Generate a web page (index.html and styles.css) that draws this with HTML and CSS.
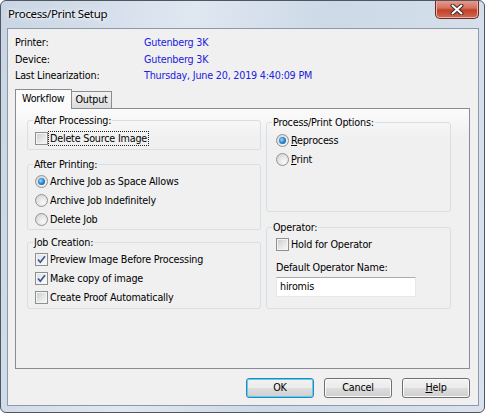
FILE: index.html
```html
<!DOCTYPE html>
<html lang="en">
<head>
  <meta charset="UTF-8">
  <title>Process/Print Setup</title>
  <link rel="stylesheet" href="styles.css">
</head>
<body>

  <div class="window">
    <div class="titlebar">
      <span class="title">Process/Print Setup</span>
      <span class="close">
        <svg width="14" height="11" viewBox="0 0 14 11">
          <path d="M2.5 1.5 L11.5 9.5 M11.5 1.5 L2.5 9.5" stroke="#3b2a28" stroke-width="4" stroke-linecap="round"/>
          <path d="M2.5 1.5 L11.5 9.5 M11.5 1.5 L2.5 9.5" stroke="#fff" stroke-width="2" stroke-linecap="round"/>
        </svg>
      </span>
    </div>

    <div class="client">
      <div class="info">
        <span>Printer:</span><span class="val">Gutenberg 3K</span>
        <span>Device:</span><span class="val">Gutenberg 3K</span>
        <span>Last Linearization:</span><span class="val">Thursday, June 20, 2019 4:40:09 PM</span>
      </div>

      <div class="tabs">
        <span class="tab active">Workflow</span>
        <span class="tab">Output</span>
      </div>

      <div class="panel">
        <div class="col col-left">
          <fieldset class="grp g-proc">
            <legend>After Processing:</legend>
            <div class="row"><span class="cb"></span><span class="focus">Delete Source Image</span></div>
          </fieldset>

          <fieldset class="grp g-print">
            <legend>After Printing:</legend>
            <div class="row"><span class="rb on"></span>Archive Job as Space Allows</div>
            <div class="row"><span class="rb"></span>Archive Job Indefinitely</div>
            <div class="row"><span class="rb"></span>Delete Job</div>
          </fieldset>

          <fieldset class="grp g-job">
            <legend>Job Creation:</legend>
            <div class="row"><span class="cb on"><svg width="11" height="11" viewBox="0 0 11 11"><path d="M2 5.5 L4.3 8.2 L9 2.2" fill="none" stroke="#3d5592" stroke-width="1.7"/></svg></span>Preview Image Before Processing</div>
            <div class="row"><span class="cb on"><svg width="11" height="11" viewBox="0 0 11 11"><path d="M2 5.5 L4.3 8.2 L9 2.2" fill="none" stroke="#3d5592" stroke-width="1.7"/></svg></span>Make copy of image</div>
            <div class="row"><span class="cb"></span>Create Proof Automatically</div>
          </fieldset>
        </div>

        <div class="col col-right">
          <fieldset class="grp g-opts">
            <legend>Process/Print Options:</legend>
            <div class="row"><span class="rb on"></span><span><u>R</u>eprocess</span></div>
            <div class="row"><span class="rb"></span><span><u>P</u>rint</span></div>
          </fieldset>

          <fieldset class="grp g-oper">
            <legend>Operator:</legend>
            <div class="row"><span class="cb"></span>Hold for Operator</div>
            <div class="field-label">Default Operator Name:</div>
            <div class="textbox">hiromis</div>
          </fieldset>
        </div>
      </div>

      <div class="buttons">
        <span class="btn default">OK</span>
        <span class="btn">Cancel</span>
        <span class="btn"><u>H</u>elp</span>
      </div>
    </div>
  </div>

</body>
</html>
```

FILE: styles.css
```css
:root {
  --face: #f0f0f0;
  --text: #000;
  --link: #2020e0;
  --tab-line: #898c95;
  --group-line: #d5dfe5;
}

body {
  margin: 0;
  font-family: "DejaVu Sans Condensed", "DejaVu Sans", sans-serif;
  font-stretch: condensed;
  font-size: 10.7px;
  letter-spacing: -0.2px;
  color: var(--text);
  background: #fff;
}

.window {
  width: 485px;
  height: 413px;
  box-sizing: border-box;
  border: 1px solid #4f5660;
  border-radius: 6px;
  background: linear-gradient(100deg, #c9d5e4 0%, #dfe7f1 35%, #cdd9e7 60%, #d9e2ee 100%);
  display: flex;
  flex-direction: column;
  overflow: hidden;
}

.titlebar {
  height: 27px;
  display: flex;
  align-items: flex-start;
  padding-left: 7px;
}

.title {
  font-family: "Noto Sans", "Open Sans", sans-serif;
  font-stretch: normal;
  font-size: 11.5px;
  letter-spacing: -0.35px;
  margin-top: 5px;
  text-shadow: 0 0 6px #fff, 0 0 3px #fff;
}

.close {
  margin-left: auto;
  margin-right: 5px;
  margin-top: -1px;
  width: 44px;
  height: 19px;
  box-sizing: border-box;
  border: 1px solid #6b2b22;
  border-top: none;
  border-radius: 0 0 5px 5px;
  background: linear-gradient(#e8a093 0%, #d7705e 45%, #c2402a 55%, #cf6a4e 100%);
  box-shadow: inset 0 0 0 1px #eab4aa;
  display: flex;
  align-items: center;
  justify-content: center;
}

.client {
  flex: 1;
  margin: 0 5px 6px 6px;
  border: 1px solid #8e99a8;
  background: var(--face);
  padding: 6px 8px 7px 7px;
  display: flex;
  flex-direction: column;
}

.info {
  display: grid;
  grid-template-columns: 129px auto;
  line-height: 16.5px;
}

.info .val {
  color: var(--link);
}

.tabs {
  display: flex;
  align-items: flex-end;
  margin-top: 4px;
  margin-bottom: -1px;
  position: relative;
  z-index: 1;
}

.tab {
  border: 1px solid var(--tab-line);
  border-bottom: none;
  height: 16px;
  line-height: 16px;
  padding: 0 3px;
  margin-bottom: 1px;
  background: linear-gradient(#f2f2f2, #dcdcdc);
}

.tab.active {
  height: 19px;
  line-height: 18px;
  padding: 0 7px 0 6px;
  margin-bottom: 0;
  margin-right: -1px;
  background: #fbfbfb;
  position: relative;
  z-index: 2;
}

.panel {
  height: 261px;
  box-sizing: border-box;
  border: 1px solid var(--tab-line);
  background: linear-gradient(#fbfbfb 0px, var(--face) 30px);
  display: grid;
  grid-template-columns: 234px 185px;
  column-gap: 5px;
  padding-left: 11px;
  align-items: start;
}

.col {
  display: flex;
  flex-direction: column;
}

.col-left {
  padding-top: 5px;
}

.col-right {
  padding-top: 7px;
}

.grp {
  margin: 0;
  padding: 0;
  border: 1px solid var(--group-line);
  border-radius: 3px;
  min-width: 0;
}

.grp legend {
  margin-left: 5px;
  padding: 0 1px;
  line-height: 13px;
}

.row {
  display: flex;
  align-items: center;
  gap: 2px;
  height: 19px;
  margin-left: 7px;
}

.col-right .row {
  margin-left: 9px;
}

.g-proc { padding: 2px 0 1px; }
.g-print { padding: 1px 0 0; margin-top: 8px; }
.g-job { padding: 1px 0 1px; margin-top: 6px; }
.g-opts { padding: 2px 0 42px; }
.g-oper { padding: 1px 0 11px; margin-top: 9px; }

.cb {
  width: 13px;
  height: 13px;
  box-sizing: border-box;
  border: 1px solid #8e8f8f;
  background: linear-gradient(135deg, #c9cbcd 0%, #eceded 70%, #f7f7f7 100%);
  box-shadow: inset 0 0 0 1px #f4f4f4;
  display: flex;
  align-items: center;
  justify-content: center;
  flex-shrink: 0;
}

.cb.on {
  background: linear-gradient(135deg, #dcdfe3 0%, #f4f5f6 70%, #fff 100%);
}

.rb {
  width: 13px;
  height: 13px;
  box-sizing: border-box;
  border: 1px solid #939393;
  border-radius: 50%;
  background: radial-gradient(circle at 65% 70%, #fafafa 0%, #e2e2e2 55%, #cdcdcd 100%);
  display: flex;
  align-items: center;
  justify-content: center;
  flex-shrink: 0;
}

.rb.on::after {
  content: "";
  width: 7px;
  height: 7px;
  border-radius: 50%;
  background: radial-gradient(circle at 40% 40%, #a6dcfb 0%, #2b8ad5 45%, #0d4f8f 100%);
}

.focus {
  outline: 1px dotted #222;
  padding: 0 1px;
  margin-left: -1px;
  line-height: 13px;
}

.field-label {
  margin: 7px 0 0 9px;
  line-height: 13px;
}

.textbox {
  margin: 3px 0 0 9px;
  width: 140px;
  height: 20px;
  box-sizing: border-box;
  border: 1px solid #e3e9ef;
  border-top-color: #abadb3;
  background: #fff;
  line-height: 18px;
  padding-left: 3px;
}

.buttons {
  display: flex;
  justify-content: flex-end;
  gap: 10px;
  margin-top: 9px;
  width: 455px;
}

.btn {
  width: 68px;
  height: 20px;
  box-sizing: border-box;
  border: 1px solid #707070;
  border-radius: 3px;
  background: linear-gradient(#f2f2f2 0%, #ebebeb 50%, #dddddd 51%, #cfcfcf 100%);
  box-shadow: inset 0 0 0 1px #fbfbfb;
  text-align: center;
  line-height: 18px;
}

.btn.default {
  border-color: #3c7fb1;
  box-shadow: inset 0 0 0 1px #48d8fb;
}
```
